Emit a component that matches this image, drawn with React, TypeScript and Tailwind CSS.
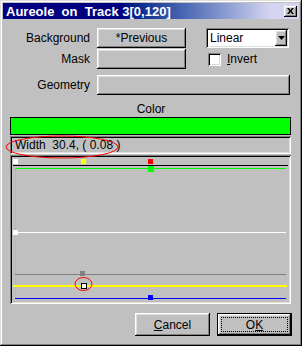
import React from "react";

// Win98-style bevels
const raised =
  "bg-[#c0c0c0] shadow-[inset_-1px_-1px_#000,inset_1px_1px_#fff,inset_-2px_-2px_#808080,inset_2px_2px_#dfdfdf]";
const sunken =
  "shadow-[inset_1px_1px_#808080,inset_-1px_-1px_#fff,inset_2px_2px_#000,inset_-2px_-2px_#dfdfdf]";

function Label({ children }: { children: React.ReactNode }) {
  return <div className="w-[80px] text-right leading-none text-[12px]">{children}</div>;
}

export default function App() {
  return (
    <div
      className="relative w-[302px] h-[346px] bg-[#c0c0c0] p-[3px] text-[11px] text-black shadow-[inset_-1px_-1px_#000,inset_1px_1px_#dfdfdf,inset_-2px_-2px_#808080,inset_2px_2px_#fff]"
      style={{ fontFamily: '"Liberation Sans", Arial, sans-serif' }}
    >
      {/* Title bar */}
      <div className="h-[16px] flex items-center justify-between pl-[3px] pr-[2px] bg-linear-to-r from-[#000080] from-40% to-[#d4d4f0] to-90%">
        <span className="text-white font-bold text-[13px] whitespace-pre leading-none">
          Aureole  on  Track 3[0,120]
        </span>
        <div className={`${raised} w-[13px] h-[11px] flex items-center justify-center`}>
          <svg width="7" height="6" viewBox="0 0 7 6">
            <path d="M0 0h2l1.5 2 1.5-2h2L4.5 3 7 6H5L3.5 4 2 6H0l2.5-3z" fill="#000" />
          </svg>
        </div>
      </div>

      {/* Client */}
      <div className="flex flex-col px-[7px] pt-[9px]">
        <div className="flex items-center h-[20px]">
          <Label>Background</Label>
          <div className={`${raised} ml-[7px] w-[89px] h-[20px] flex items-center justify-center text-[12px]`}>
            *Previous
          </div>
          <div className={`${sunken} ml-[20px] w-[83px] h-[20px] bg-white flex items-center justify-between pl-[4px] pr-[2px]`}>
            <span className="text-[12px]">Linear</span>
            <div className={`${raised} w-[12px] h-[16px] flex items-center justify-center`}>
              <svg width="7" height="4" viewBox="0 0 7 4">
                <path d="M0 0h7L3.5 4z" fill="#000" />
              </svg>
            </div>
          </div>
        </div>

        <div className="flex items-center h-[20px] mt-[1px]">
          <Label>Mask</Label>
          <div className={`${raised} ml-[7px] w-[89px] h-[20px]`} />
          <div className={`${sunken} ml-[22px] w-[13px] h-[13px] bg-white`} />
          <span className="ml-[6px] text-[12px]">
            <span className="underline">I</span>nvert
          </span>
        </div>

        <div className="flex items-center h-[20px] mt-[6px]">
          <Label>Geometry</Label>
          <div className={`${raised} ml-[7px] w-[193px] h-[20px]`} />
        </div>

        <div className="mt-[8px] h-[13px] text-center text-[12px] leading-none">Color</div>

        <div className="mt-[1px] h-[18px] w-[281px] bg-[#00ff00] border border-black" />

        <div className={`${sunken} mt-[1px] h-[18px] w-[281px] flex items-center pl-[5px] text-[12px] whitespace-pre`}>
          Width  30.4, ( 0.08 )
        </div>

        <div className={`${sunken} mt-[1px] h-[149px] w-[281px] overflow-hidden`}>
          <svg width="281" height="149" viewBox="10 153 281 149" shapeRendering="crispEdges">
            <rect x="13" y="157" width="5" height="5" fill="#fff" />
            <rect x="81" y="157" width="5" height="5" fill="#ffff00" />
            <rect x="148" y="157" width="5" height="5" fill="#ff0000" />
            <line x1="13" y1="163.5" x2="288" y2="163.5" stroke="#000" />
            <line x1="15.5" y1="166" x2="15.5" y2="297" stroke="#80e080" />
            <line x1="15" y1="166.5" x2="286" y2="166.5" stroke="#00ff00" />
            <rect x="148" y="164" width="6" height="6" fill="#00ff00" />

            <line x1="13" y1="230.5" x2="286" y2="230.5" stroke="#fff" />
            <rect x="13" y="228" width="5" height="5" fill="#fff" />

            <line x1="15" y1="272.5" x2="286" y2="272.5" stroke="#808080" />
            <rect x="80" y="269" width="5" height="5" fill="#808080" />

            <line x1="13" y1="284" x2="287" y2="284" stroke="#ffff00" strokeWidth="2" />
            <rect x="81.5" y="281.5" width="5" height="5" fill="#fff" stroke="#000" />

            <line x1="15" y1="296.5" x2="286" y2="296.5" stroke="#0000ff" />
            <rect x="148" y="293" width="5" height="5" fill="#0000ff" />
          </svg>
        </div>

        <div className="mt-[9px] flex justify-end gap-[7px]">
          <div className={`${raised} w-[75px] h-[23px] flex items-center justify-center text-[12px]`}>
            <span>
              <span className="underline">C</span>ancel
            </span>
          </div>
          <div className="w-[75px] h-[23px] border border-black">
            <div className={`${raised} w-full h-full p-[3px]`}>
              <div className="w-full h-full border border-dotted border-black flex items-center justify-center text-[12px]">
                <span>
                  O<span className="underline">K</span>
                </span>
              </div>
            </div>
          </div>
        </div>
      </div>

      {/* Red annotation ellipses */}
      <svg className="absolute left-0 top-0 pointer-events-none" width="302" height="346">
        <ellipse cx="62" cy="147" rx="56" ry="11" fill="none" stroke="#ff0000" />
        <ellipse cx="83.5" cy="284" rx="8.5" ry="6.5" fill="none" stroke="#ff0000" />
      </svg>
    </div>
  );
}
